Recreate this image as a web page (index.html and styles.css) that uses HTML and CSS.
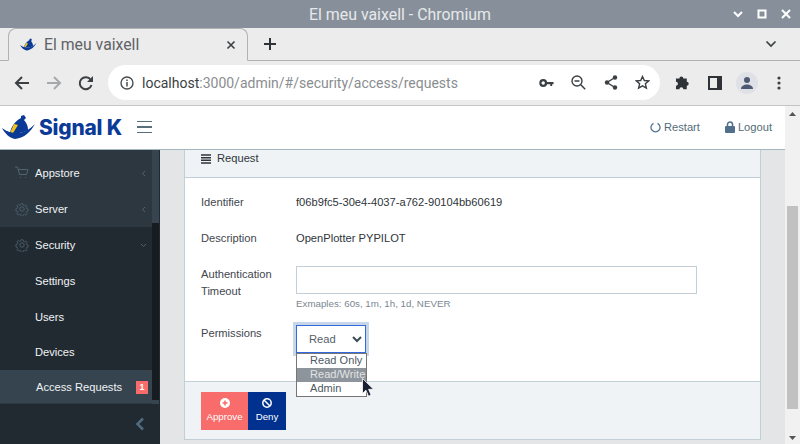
FILE: index.html
```html
<!DOCTYPE html>
<html lang="en">
<head>
    <meta charset="UTF-8">
    <meta name="viewport" content="width=device-width, initial-scale=1.0">
    <title>El meu vaixell - Chromium</title>
    <link rel="stylesheet" href="styles.css">
</head>
<body>
    <svg class="defs" width="0" height="0">
        <symbol id="boat" viewBox="0 0 34 26">
            <path fill="#0a3a96" d="M19 2l3-1 2 3-2 2c3 3 4 7 4 10-5 3-12 4-18 3 1-6 5-12 11-15z"/>
            <path fill="#f5c518" d="M12 10l4 1-5 8H8z"/>
            <path fill="#0a3a96" d="M0 14c5 4 10 5 15 5 6 0 12-3 18-9-4 7-10 14-20 15C8 24 3 20 0 14z"/>
        </symbol>
        <symbol id="gear" viewBox="0 0 16 16">
            <g fill="none" stroke="#4f6472" stroke-width="1">
                <circle cx="8" cy="8" r="2.500"/>
                <path d="M6.800 1.500h2.400l.4 1.900 1.300.6 1.700-1 1.600 1.700-1 1.600.6 1.300 1.700.4v2.400l-1.700.4-.6 1.300 1 1.600-1.600 1.700-1.700-1-1.300.6-.4 1.900H6.800l-.4-1.900-1.300-.6-1.700 1-1.600-1.700 1-1.600-.6-1.300-1.700-.4V7.400l1.700-.4.6-1.300-1-1.600 1.600-1.700 1.700 1 1.300-.6z" transform="translate(.6 .6) scale(.93)"/>
            </g>
        </symbol>
    </svg>

    <div class="titlebar">
        <span class="titlebar-text">El meu vaixell - Chromium</span>
        <div class="window-btns">
            <svg width="12" height="12" viewBox="0 0 12 12"><path d="M2 4l4 4 4-4" fill="none" stroke="#fff" stroke-width="2"/></svg>
            <svg width="12" height="12" viewBox="0 0 12 12"><rect x="2.500" y="2.500" width="7" height="7" fill="none" stroke="#fff" stroke-width="2"/></svg>
            <svg width="12" height="12" viewBox="0 0 12 12"><path d="M2 2l8 8M10 2l-8 8" fill="none" stroke="#fff" stroke-width="2"/></svg>
        </div>
    </div>

    <div class="tabstrip">
        <div class="tab">
            <svg class="tab-icon" width="17" height="13"><use href="#boat"/></svg>
            <span class="tab-title">El meu vaixell</span>
            <svg class="tab-close" width="10" height="10" viewBox="0 0 10 10"><path d="M1.500 1.500l7 7M8.500 1.500l-7 7" stroke="#3c4043" stroke-width="1.600"/></svg>
        </div>
        <svg class="new-tab" width="14" height="14" viewBox="0 0 14 14"><path d="M7 1v12M1 7h12" stroke="#2f3337" stroke-width="2"/></svg>
        <svg class="tab-list" width="12" height="8" viewBox="0 0 12 8"><path d="M1.500 1.500L6 6l4.500-4.500" fill="none" stroke="#3c4043" stroke-width="1.700"/></svg>
    </div>

    <div class="toolbar">
        <svg class="nav-btn" width="16" height="16" viewBox="0 0 16 16"><path d="M15 8H2M8 2L2 8l6 6" fill="none" stroke="#3c4043" stroke-width="2"/></svg>
        <svg class="nav-btn" width="16" height="16" viewBox="0 0 16 16"><path d="M1 8h13M8 2l6 6-6 6" fill="none" stroke="#a6a8aa" stroke-width="2"/></svg>
        <svg class="nav-btn" width="16" height="16" viewBox="0 0 16 16"><path d="M13.500 10a6 6 0 1 1-.8-5.200" fill="none" stroke="#3c4043" stroke-width="2"/><path d="M15 1v6H9z" fill="#3c4043"/></svg>
        <div class="omnibox">
            <svg class="info-icon" width="14" height="14" viewBox="0 0 14 14"><circle cx="7" cy="7" r="6" fill="none" stroke="#4a4d50" stroke-width="1.400"/><path d="M7 6v4.500M7 3.500v1.500" stroke="#4a4d50" stroke-width="1.500"/></svg>
            <span class="url"><span class="url-host">localhost</span>:3000/admin/#/security/access/requests</span>
            <svg class="omni-icon" width="15" height="10" viewBox="0 0 16 10"><circle cx="4.500" cy="5" r="3" fill="none" stroke="#3c4043" stroke-width="2.400"/><path d="M8 3.800h7.500v2.400H14v2h-2v-2H8z" fill="#3c4043"/></svg>
            <svg class="omni-icon" width="15" height="15" viewBox="0 0 15 15"><circle cx="6" cy="6" r="5" fill="none" stroke="#3c4043" stroke-width="1.400"/><path d="M3.500 6h5M9.800 9.800l4.400 4.400" stroke="#3c4043" stroke-width="1.500"/></svg>
            <svg class="omni-icon" width="14" height="15" viewBox="0 0 14 15"><path d="M11 2.500L3 7.500l8 5" fill="none" stroke="#3c4043" stroke-width="1.400"/><circle cx="11" cy="2.500" r="2.200" fill="#3c4043"/><circle cx="3" cy="7.500" r="2.200" fill="#3c4043"/><circle cx="11" cy="12.500" r="2.200" fill="#3c4043"/></svg>
            <svg class="omni-icon omni-icon-last" width="15" height="15" viewBox="0 0 15 15"><path d="M7.500 1.500l1.800 4 4.400.4-3.300 2.900 1 4.300-3.900-2.300-3.900 2.300 1-4.300L1.300 5.900l4.400-.4z" fill="none" stroke="#3c4043" stroke-width="1.400"/></svg>
        </div>
        <svg class="ext-icon" width="15" height="15" viewBox="0 0 15 15"><path d="M1 4h3.500a2 2 0 1 1 4 0H12v3.500a2 2 0 1 1 0 4V15H8.500a2 2 0 1 0-4 0H1v-3.500a2 2 0 1 0 0-4z" fill="#2f3337" transform="translate(0 -.5) scale(.98)"/></svg>
        <svg class="ext-icon" width="14" height="14" viewBox="0 0 14 14"><rect x="1" y="1" width="12" height="12" fill="none" stroke="#2f3337" stroke-width="2"/><rect x="9" y="1" width="4" height="12" fill="#2f3337"/></svg>
        <div class="avatar">
            <svg width="14" height="14" viewBox="0 0 14 14"><circle cx="7" cy="4" r="3" fill="#4d5a72"/><path d="M1 13c0-3 3-4.500 6-4.500s6 1.500 6 4.500z" fill="#4d5a72"/></svg>
        </div>
        <svg class="menu-dots" width="4" height="14" viewBox="0 0 4 14"><circle cx="2" cy="2" r="1.600" fill="#3c4043"/><circle cx="2" cy="7" r="1.600" fill="#3c4043"/><circle cx="2" cy="12" r="1.600" fill="#3c4043"/></svg>
    </div>

    <div class="viewport">
        <div class="app">
            <header class="app-header">
                <a class="brand">
                    <svg width="34" height="26"><use href="#boat"/></svg>
                    <span class="brand-name">Signal K</span>
                </a>
                <div class="hamburger"><i></i><i></i><i></i></div>
                <div class="header-links">
                    <a class="header-link">
                        <svg width="11" height="11" viewBox="0 0 11 11"><path d="M3.500 1.300a4.500 4.500 0 1 0 4 0" fill="none" stroke="#4f7391" stroke-width="1.300"/></svg>
                        Restart
                    </a>
                    <a class="header-link">
                        <svg width="10" height="12" viewBox="0 0 10 12"><path d="M2.500 5V3.500a2.500 2.500 0 0 1 5 0V5" fill="none" stroke="#4f6f8a" stroke-width="1.500"/><rect y="5" width="10" height="7" rx="1" fill="#4f6f8a"/></svg>
                        Logout
                    </a>
                </div>
            </header>

            <div class="app-body">
                <nav class="sidebar">
                    <div class="nav-scroll">
                        <ul class="nav-list">
                            <li class="nav-item">
                                <svg class="nav-icon" width="14" height="14" viewBox="0 0 14 14"><path d="M0 1h2.500l2 7.500h7L13 3.500H3.200M5 11.500h.8M10 11.500h.8" fill="none" stroke="#4f6472"/></svg>
                                <span>Appstore</span>
                                <svg class="nav-caret" width="5" height="7" viewBox="0 0 5 7"><path d="M4 1L1.500 3.500 4 6" fill="none" stroke="#4f6472"/></svg>
                            </li>
                            <li class="nav-item">
                                <svg class="nav-icon" width="14" height="14"><use href="#gear"/></svg>
                                <span>Server</span>
                                <svg class="nav-caret" width="5" height="7" viewBox="0 0 5 7"><path d="M4 1L1.500 3.500 4 6" fill="none" stroke="#4f6472"/></svg>
                            </li>
                            <li class="nav-group">
                                <div class="nav-item nav-item-open">
                                    <svg class="nav-icon" width="14" height="14"><use href="#gear"/></svg>
                                    <span>Security</span>
                                    <svg class="nav-caret nav-caret-down" width="7" height="5" viewBox="0 0 7 5"><path d="M1 1l2.500 2.500L6 1" fill="none" stroke="#4f6472"/></svg>
                                </div>
                                <div class="nav-sub">Settings</div>
                                <div class="nav-sub">Users</div>
                                <div class="nav-sub">Devices</div>
                            </li>
                            <li class="nav-sub nav-sub-active">
                                <span>Access Requests</span>
                                <span class="nav-badge">1</span>
                            </li>
                        </ul>
                        <div class="nav-scrollbar"><div class="nav-thumb"></div><div class="nav-thumb-end"></div></div>
                    </div>
                    <div class="sidebar-minimizer">
                        <svg width="10" height="14" viewBox="0 0 10 14"><path d="M8 1.500L2.500 7 8 12.500" fill="none" stroke="#4f6a7e" stroke-width="2.600"/></svg>
                    </div>
                </nav>

                <main class="content">
                    <section class="card">
                        <div class="card-header">
                            <svg width="10" height="10" viewBox="0 0 10 10"><path d="M0 1h10M0 3.700h10M0 6.300h10M0 9h10" stroke="#2f353a" stroke-width="1.500"/></svg>
                            Request
                        </div>
                        <div class="card-body">
                            <div class="form-row">
                                <label class="form-label">Identifier</label>
                                <span>f06b9fc5-30e4-4037-a762-90104bb60619</span>
                            </div>
                            <div class="form-row">
                                <label class="form-label">Description</label>
                                <span>OpenPlotter PYPILOT</span>
                            </div>
                            <div class="form-row form-row-timeout">
                                <label class="form-label">Authentication Timeout</label>
                                <div class="form-field">
                                    <div class="text-input"></div>
                                    <small class="help-text">Exmaples: 60s, 1m, 1h, 1d, NEVER</small>
                                </div>
                            </div>
                            <div class="form-row form-row-perms">
                                <label class="form-label">Permissions</label>
                                <div class="select-wrap">
                                    <div class="select-box">
                                        <span class="select-value">Read (</span>
                                        <svg width="10" height="7" viewBox="0 0 10 7"><path d="M1 1l4 4 4-4" fill="none" stroke="#3e4c56" stroke-width="2"/></svg>
                                    </div>
                                    <ul class="select-list">
                                        <li>Read Only</li>
                                        <li class="select-hover">Read/Write</li>
                                        <li>Admin</li>
                                    </ul>
                                    <svg class="cursor" width="12" height="19" viewBox="0 0 12 19"><path d="M.5.500v15l3.500-3.300 2.500 6 2.600-1.100-2.500-5.800h5z" fill="#1a1f33" stroke="#fff" stroke-width=".8"/></svg>
                                </div>
                            </div>
                        </div>
                        <div class="card-footer">
                            <button class="btn btn-approve">
                                <svg width="10" height="10" viewBox="0 0 10 10"><circle cx="5" cy="5" r="5" fill="#fff"/><path d="M5 2.500v5M2.500 5h5" stroke="#f86c6b" stroke-width="1.500"/></svg>
                                Approve
                            </button>
                            <button class="btn btn-deny">
                                <svg width="10" height="10" viewBox="0 0 10 10"><circle cx="5" cy="5" r="4.200" fill="none" stroke="#fff" stroke-width="1.500"/><path d="M2 2l6 6" stroke="#fff" stroke-width="1.500"/></svg>
                                Deny
                            </button>
                        </div>
                    </section>
                </main>
            </div>
        </div>

        <div class="page-scrollbar">
            <svg width="7" height="4" viewBox="0 0 7 4"><path d="M3.500 0L7 4H0z" fill="#555"/></svg>
            <div class="page-track"><div class="page-thumb"></div></div>
            <svg width="7" height="4" viewBox="0 0 7 4"><path d="M0 0h7L3.500 4z" fill="#555"/></svg>
        </div>
    </div>
</body>
</html>
```

FILE: styles.css
```css
* {
    box-sizing: border-box;
}

html, body {
    height: 100%;
    margin: 0;
    overflow: hidden;
}

body {
    display: flex;
    flex-direction: column;
    font-family: "Liberation Sans", Arial, sans-serif;
    font-size: 11.150px;
    color: #2f353a;
    background: #e4e5e6;
}

.defs {
    position: absolute;
}

/* window and browser chrome */
.titlebar {
    height: 28px;
    flex: none;
    background: #87909a;
    display: flex;
    align-items: center;
    justify-content: center;
    position: relative;
}

.titlebar-text {
    font-family: Roboto, sans-serif;
    font-size: 15.900px;
    color: #e6e8ea;
}

.window-btns {
    position: absolute;
    right: 8px;
    top: 8px;
    display: flex;
    gap: 12px;
}

.tabstrip {
    height: 33px;
    flex: none;
    background: #ececec;
    border-bottom: 1px solid #b2b2b2;
    display: flex;
    align-items: center;
    padding-left: 8px;
    position: relative;
}

.tab {
    width: 240px;
    height: 33px;
    margin-top: 1px;
    background: #ececec;
    border: 1px solid #b2b2b2;
    border-bottom-color: #ececec;
    border-radius: 8px 8px 0 0;
    display: flex;
    align-items: center;
    padding: 0 11px;
}

.tab-icon {
    margin-right: 7px;
}

.tab-title {
    flex: 1;
    font-family: Roboto, sans-serif;
    font-size: 15.800px;
    color: #5f6266;
}

.new-tab {
    margin-left: 15px;
}

.tab-list {
    margin-left: auto;
    margin-right: 23px;
}

.toolbar {
    height: 45px;
    flex: none;
    background: #ececec;
    border-bottom: 1px solid #c4c4c4;
    display: flex;
    align-items: center;
    padding-left: 14px;
    padding-bottom: 1px;
}

.nav-btn {
    margin-right: 16px;
}

.omnibox {
    width: 552px;
    height: 35px;
    margin-left: -2px;
    background: #fff;
    border-radius: 18px;
    display: flex;
    align-items: center;
    padding-left: 12px;
}

.info-icon {
    margin-right: 8px;
}

.url {
    flex: 1;
    font-family: Roboto, sans-serif;
    font-size: 14px;
    color: #8a8d90;
}

.url-host {
    color: #3c4043;
}

.omni-icon {
    margin-right: 17.500px;
}

.omni-icon-last {
    margin-right: 10px;
}

.ext-icon {
    margin-left: 15px;
    margin-right: 3px;
}

.avatar {
    width: 22px;
    height: 22px;
    margin-left: 11px;
    border-radius: 50%;
    background: #dfe1e6;
    display: flex;
    align-items: center;
    justify-content: center;
}

.menu-dots {
    margin-left: 19px;
}

/* page */
.viewport {
    flex: 1;
    min-height: 0;
    display: flex;
}

.app {
    flex: 1;
    min-width: 0;
    display: flex;
    flex-direction: column;
}

.app-header {
    height: 44px;
    flex: none;
    background: #fff;
    border-bottom: 1px solid #a4b7c1;
    display: flex;
    align-items: center;
    padding: 0 13px 1px 2px;
}

.brand {
    display: flex;
    align-items: center;
    gap: 3px;
}

.brand-name {
    font-family: Inter, "Liberation Sans", sans-serif;
    font-size: 20.900px;
    font-weight: 800;
    color: #0b3a97;
    letter-spacing: -.2px;
}

.hamburger {
    margin-left: 15px;
    width: 15px;
    display: flex;
    flex-direction: column;
    gap: 4px;
}

.hamburger i {
    height: 1.500px;
    background: #5a6f7e;
}

.header-links {
    margin-left: auto;
    display: flex;
    gap: 25px;
}

.header-link {
    display: flex;
    align-items: center;
    gap: 3px;
    color: #536c79;
}

.app-body {
    flex: 1;
    min-height: 0;
    display: flex;
}

/* sidebar */
.sidebar {
    width: 160px;
    flex: none;
    background: #222a31;
    display: flex;
    flex-direction: column;
}

.nav-scroll {
    height: 254px;
    flex: none;
    display: flex;
    overflow: hidden;
}

.nav-list {
    list-style: none;
    margin: 0;
    padding: 5px 0 0;
    flex: 1;
    background: #2d3740;
    color: #f0f3f5;
}

.nav-item {
    height: 36px;
    background: #2d3740;
    display: flex;
    align-items: center;
    padding: 0 6px 0 15px;
}

.nav-item-open {
    background: #222a31;
}

.nav-icon {
    margin-right: 6px;
}

.nav-item span {
    flex: 1;
}

.nav-caret-down {
    margin-right: -1px;
}

.nav-sub {
    height: 35.700px;
    display: flex;
    align-items: center;
    padding: 0 4px 0 35px;
    background: #222a31;
}

.nav-sub-active {
    height: 33px;
    padding-top: 1px;
    padding-left: 36px;
    background: #35444f;
    justify-content: space-between;
}

.nav-badge {
    width: 12px;
    height: 13px;
    background: #f86c6b;
    color: #fff;
    font-size: 9px;
    font-weight: 700;
    text-align: center;
    line-height: 13px;
}

.nav-scrollbar {
    width: 7px;
    background: #171c20;
    flex: none;
    margin-right: 1px;
    display: flex;
    flex-direction: column;
    justify-content: space-between;
}

.nav-thumb {
    height: 73px;
    background: #35444f;
}

.nav-thumb-end {
    height: 4px;
    background: #35444f;
}

.sidebar-minimizer {
    flex: 1;
    display: flex;
    align-items: center;
    justify-content: flex-end;
    padding-right: 15px;
}

/* content card */
.content {
    flex: 1;
    min-width: 0;
    padding: 0 24px 4px;
    display: flex;
}

.card {
    flex: 1;
    min-width: 0;
    display: flex;
    flex-direction: column;
    border: 1px solid #c2cfd6;
    border-top: 0;
}

.card-header {
    height: 28px;
    flex: none;
    background: #f0f3f5;
    border-bottom: 1px solid #c2cfd6;
    display: flex;
    align-items: flex-start;
    gap: 6px;
    padding: 2px 16px 0;
    line-height: 13px;
}

.card-header svg {
    margin-top: 2px;
}

.card-body {
    flex: 1;
    min-height: 0;
    background: #fff;
    padding: 17px 16px 0;
}

.form-row {
    display: flex;
    line-height: 14px;
    height: 36px;
}

.form-label {
    width: 95px;
    flex: none;
    color: #3f474e;
}

.form-row-timeout {
    height: 58px;
}

.form-row-timeout .form-label {
    line-height: 17px;
    margin-top: -1px;
}

.form-field {
    flex: 1;
}

.text-input {
    width: 401px;
    height: 28px;
    margin-top: -1px;
    background: #fff;
    border: 1px solid #c2cfd6;
}

.help-text {
    display: block;
    margin-top: 4px;
    font-size: 9.750px;
    line-height: 12px;
    color: #7b8791;
}

.form-row-perms .form-label {
    margin-top: 1px;
}

.select-wrap {
    position: relative;
    height: 30px;
}

.select-box {
    width: 70px;
    height: 28px;
    background: #fff;
    border: 1px solid #3268e0;
    box-shadow: 0 0 0 3px #c9d6ea;
    display: flex;
    align-items: center;
    justify-content: space-between;
    padding: 0 3px 0 12px;
    font-size: 11.200px;
    color: #55606a;
}

.select-value {
    width: 28px;
    overflow: hidden;
    white-space: nowrap;
}

.select-list {
    position: absolute;
    left: 0;
    top: 28px;
    width: 71px;
    margin: 0;
    padding: 0;
    list-style: none;
    background: #fff;
    border: 1px solid #767676;
    color: #4d5862;
    font-size: 11px;
    letter-spacing: .05px;
    line-height: 13px;
    z-index: 2;
}

.select-list li {
    padding: 0 0 1px 13px;
    white-space: nowrap;
}

.select-hover {
    background: #8d949b;
    color: #e2e4e6;
}

.cursor {
    position: absolute;
    left: 66px;
    top: 53px;
    z-index: 3;
}

.card-footer {
    height: 58px;
    flex: none;
    background: #f0f3f5;
    border-top: 1px solid #c2cfd6;
    display: flex;
    padding: 10px 16px 0;
}

.btn {
    height: 38px;
    border: 0;
    padding: 6px 0 0;
    font-family: inherit;
    font-size: 9.700px;
    color: #fff;
    display: flex;
    flex-direction: column;
    align-items: center;
    gap: 3px;
}

.btn-approve {
    width: 47px;
    background: #f86c6b;
}

.btn-deny {
    width: 38px;
    background: #00318f;
}

/* browser scrollbar */
.page-scrollbar {
    width: 15px;
    flex: none;
    background: #f1f1f1;
    display: flex;
    flex-direction: column;
    align-items: center;
    padding: 6px 0 4px;
}

.page-track {
    flex: 1;
    width: 100%;
    padding: 90px 2px 27px;
}

.page-thumb {
    height: 100%;
    background: #c1c1c1;
}
```
